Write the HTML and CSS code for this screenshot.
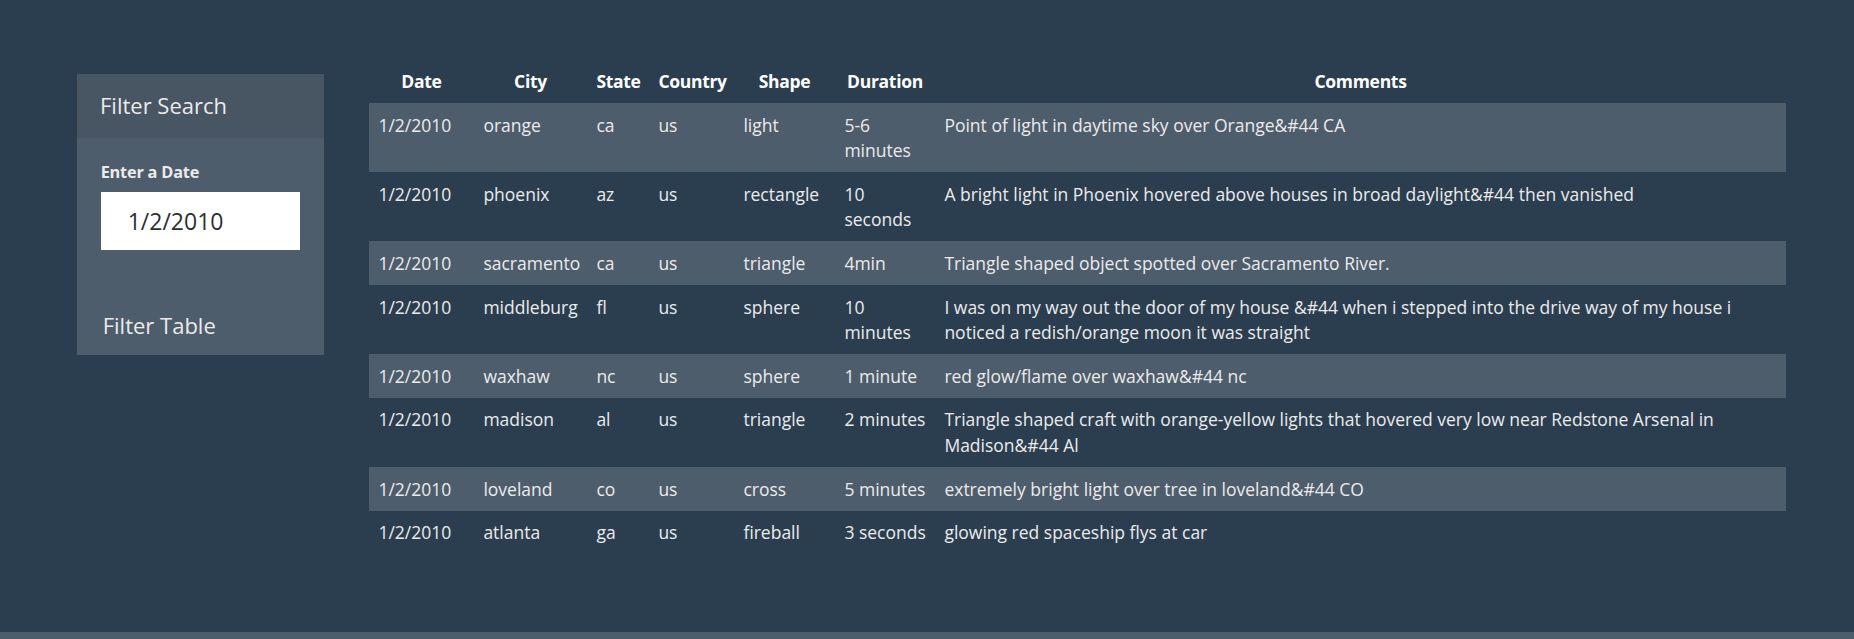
FILE: index.html
```html
<!DOCTYPE html>
<html lang="en">
<head>
<meta charset="utf-8">
<title>UFO Sightings</title>
<link rel="stylesheet" href="styles.css">
</head>
<body>
<div class="page">
  <aside class="sidebar">
    <div class="panel">
      <div class="panel-heading">Filter Search</div>
      <div class="panel-body">
        <label class="field-label" for="datetime">Enter a Date</label>
        <input class="date-input" id="datetime" type="text" value="1/2/2010">
        <button class="filter-btn" type="button">Filter Table</button>
      </div>
    </div>
  </aside>
  <main class="content">
    <table class="ufo-table">
      <thead>
        <tr>
          <th class="c-date">Date</th>
          <th class="c-city">City</th>
          <th class="c-state">State</th>
          <th class="c-country">Country</th>
          <th class="c-shape">Shape</th>
          <th class="c-duration">Duration</th>
          <th class="c-comments">Comments</th>
        </tr>
      </thead>
      <tbody>
        <tr><td>1/2/2010</td><td>orange</td><td>ca</td><td>us</td><td>light</td><td class="dur">5-6 minutes</td><td class="com">Point of light in daytime sky over Orange&amp;#44 CA</td></tr>
        <tr><td>1/2/2010</td><td>phoenix</td><td>az</td><td>us</td><td>rectangle</td><td class="dur">10 seconds</td><td class="com">A bright light in Phoenix hovered above houses in broad daylight&amp;#44 then vanished</td></tr>
        <tr><td>1/2/2010</td><td>sacramento</td><td>ca</td><td>us</td><td>triangle</td><td class="dur">4min</td><td class="com">Triangle shaped object spotted over Sacramento River.</td></tr>
        <tr><td>1/2/2010</td><td>middleburg</td><td>fl</td><td>us</td><td>sphere</td><td class="dur">10 minutes</td><td class="com">I was on my way out the door of my house &amp;#44 when i stepped into the drive way of my house i noticed a redish/orange moon it was straight</td></tr>
        <tr><td>1/2/2010</td><td>waxhaw</td><td>nc</td><td>us</td><td>sphere</td><td class="dur">1 minute</td><td class="com">red glow/flame over waxhaw&amp;#44 nc</td></tr>
        <tr><td>1/2/2010</td><td>madison</td><td>al</td><td>us</td><td>triangle</td><td class="dur">2 minutes</td><td class="com">Triangle shaped craft with orange-yellow lights that hovered very low near Redstone Arsenal in Madison&amp;#44 Al</td></tr>
        <tr><td>1/2/2010</td><td>loveland</td><td>co</td><td>us</td><td>cross</td><td class="dur">5 minutes</td><td class="com">extremely bright light over tree in loveland&amp;#44 CO</td></tr>
        <tr><td>1/2/2010</td><td>atlanta</td><td>ga</td><td>us</td><td>fireball</td><td class="dur">3 seconds</td><td class="com">glowing red spaceship flys at car</td></tr>
      </tbody>
    </table>
  </main>
</div>
<footer class="footer"></footer>
</body>
</html>
```

FILE: styles.css
```css
html, body {
  margin: 0;
  padding: 0;
}

body {
  background: #2b3e50;
  color: #ebebeb;
  font-family: "Open Sans", "Noto Sans", "DejaVu Sans", sans-serif;
  font-size: 17.5px;
  min-height: 100vh;
  display: flex;
  flex-direction: column;
}

.page {
  flex: 1;
  display: flex;
  align-items: flex-start;
  gap: 45px;
  padding: 59.5px 0 0 77px;
}

.sidebar {
  width: 247px;
  flex: none;
  margin-top: 14.5px;
}

.panel {
  background: #4e5d6c;
}

.panel-heading {
  background: #485563;
  font-size: 22px;
  line-height: 24px;
  padding: 18.5px 23px 21.5px;
  color: #ebebeb;
}

.panel-body {
  padding: 21.5px 23.7px 4px;
  display: flex;
  flex-direction: column;
  align-items: flex-start;
}

.field-label {
  font-weight: bold;
  font-size: 16.3px;
  line-height: 24px;
  margin-bottom: 8px;
  letter-spacing: -0.2px;
}

.date-input {
  box-sizing: border-box;
  width: 199px;
  height: 58px;
  border: 0;
  border-radius: 0;
  background: #ffffff;
  color: #2a2f36;
  font-family: "Open Sans", "Noto Sans", sans-serif;
  font-size: 23px;
  padding: 0 0 0 27px;
  margin: 0;
  outline: none;
}

.filter-btn {
  margin-top: 50px;
  margin-left: 2px;
  padding: 10px 0;
  border: 0;
  background: transparent;
  color: #ebebeb;
  font-family: "Open Sans", "Noto Sans", sans-serif;
  font-size: 22px;
  line-height: 31.4px;
  cursor: pointer;
}

.content {
  width: 1417px;
  flex: none;
}

.ufo-table {
  width: 100%;
  border-collapse: collapse;
  table-layout: fixed;
}

.ufo-table th,
.ufo-table td {
  box-sizing: border-box;
  padding: 9.25px 9.4px;
  line-height: 25.3px;
  vertical-align: top;
  text-align: left;
}

.ufo-table th {
  font-weight: bold;
  color: #ffffff;
  text-align: center;
  white-space: nowrap;
  letter-spacing: -0.3px;
}

.ufo-table td {
  white-space: nowrap;
}

.ufo-table td.dur {
  white-space: normal;
  padding-right: 5px;
}

.ufo-table td.com {
  white-space: normal;
  padding-right: 20px;
}

.ufo-table tbody tr:nth-child(odd) {
  background: #4e5d6c;
}

.c-date { width: 105px; }
.c-city { width: 113px; }
.c-state { width: 62px; }
.c-country { width: 85px; }
.c-shape { width: 101px; }
.c-duration { width: 100px; }
.c-comments { width: auto; }

.footer {
  height: 7px;
  background: #4e5d6c;
  flex: none;
}
```
